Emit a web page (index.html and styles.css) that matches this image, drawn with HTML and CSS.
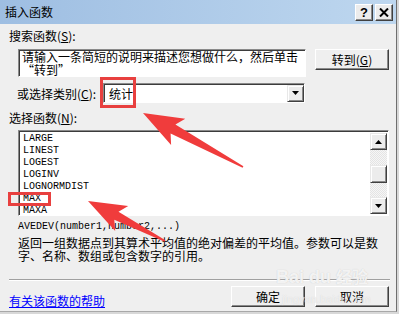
FILE: index.html
```html
<!DOCTYPE html>
<html>

<head>
  <meta charset="UTF-8">
  <title>插入函数</title>
  <link rel="stylesheet" href="styles.css">
</head>

<body>
  <div class="dialog">
    <div class="titlebar">
      <span class="title">插入函数</span>
      <div class="title-buttons">
        <span class="tbtn help">?</span>
        <span class="tbtn">
          <svg width="10" height="9" viewBox="0 0 10 9"><path d="M1 0.5 L9 8.5 M9 0.5 L1 8.5" stroke="#000" stroke-width="2"/></svg>
        </span>
      </div>
    </div>

    <div class="content">
      <div class="label">搜索函数(<u>S</u>):</div>
      <div class="search-row">
        <div class="textbox">请输入一条简短的说明来描述您想做什么，然后单击<br>“转到”</div>
        <div class="btn">转到(<u>G</u>)</div>
      </div>

      <div class="category-row">
        <div class="category-label">或选择类别(<u>C</u>):</div>
        <div class="select">
          <span class="select-value">统计</span>
          <span class="sbtn drop">
            <svg width="7" height="4" viewBox="0 0 7 4"><path d="M0 0 H7 L3.5 4 Z" fill="#000"/></svg>
          </span>
        </div>
      </div>

      <div class="label functions">选择函数(<u>N</u>):</div>
      <div class="listbox">
        <div class="list-items">
          <div>LARGE</div>
          <div>LINEST</div>
          <div>LOGEST</div>
          <div>LOGINV</div>
          <div>LOGNORMDIST</div>
          <div>MAX</div>
          <div>MAXA</div>
        </div>
        <div class="scrollbar">
          <span class="sbtn">
            <svg width="7" height="4" viewBox="0 0 7 4"><path d="M0 4 H7 L3.5 0 Z" fill="#000"/></svg>
          </span>
          <div class="track">
            <span class="sbtn thumb"></span>
          </div>
          <span class="sbtn">
            <svg width="7" height="4" viewBox="0 0 7 4"><path d="M0 0 H7 L3.5 4 Z" fill="#000"/></svg>
          </span>
        </div>
      </div>

      <div class="signature">AVEDEV(number1,number2,...)</div>
      <div class="description">
        <div>返回一组数据点到其算术平均值的绝对偏差的平均值。参数可以是数</div>
        <div>字、名称、数组或包含数字的引用。</div>
      </div>

      <div class="separator"></div>

      <div class="bottom-row">
        <a class="help-link" href="#">有关该函数的帮助</a>
        <div class="btn">确定</div>
        <div class="btn">取消</div>
      </div>
    </div>
  </div>

  <!-- annotations drawn on top of the screenshot -->
  <div class="watermark">Bai du <span class="wm-cn">经验</span></div>
  <div class="watermark-url">jingyan.baidu.com</div>
  <div class="mark mark-category"></div>
  <div class="mark mark-max"></div>
  <svg class="arrows" width="399" height="314" viewBox="0 0 399 314">
    <polygon fill="#f03c3c" points="143,113 185.3,118.7 175.4,124.6 243.4,166.3 242.6,167.7 170.6,133.4 171.1,145.1"/>
    <polygon fill="#f03c3c" points="88,201 128.2,206.1 118.5,211.8 165.4,240.3 164.6,241.7 114.3,219.8 115.2,230.9"/>
  </svg>
</body>

</html>
```

FILE: styles.css
```css
body {
  margin: 0;
  background: #d8d8d8;
  font-family: "Noto Sans CJK SC", "Liberation Sans", sans-serif;
  font-size: 12px;
  color: #000;
}

.dialog {
  position: relative;
  width: 396px;
  height: 311px;
  background: #efefef;
  border-right: 1px solid #6f6f6f;
  border-bottom: 1px solid #a8a8a8;
}

.titlebar {
  height: 24px;
  display: flex;
  align-items: center;
  justify-content: space-between;
  padding: 0 3px 0 5px;
  background: linear-gradient(to right, #9ebee2, #bed7ef);
}

.title {
  font-size: 12px;
  line-height: 14px;
}

.title-buttons {
  display: flex;
  gap: 2px;
}

.tbtn {
  width: 18px;
  height: 17px;
  box-sizing: border-box;
  display: flex;
  align-items: center;
  justify-content: center;
  background: #ececec;
  border: 1px solid;
  border-color: #fff #404040 #404040 #fff;
  box-shadow: inset -1px -1px #8a8a8a;
}

.help {
  font-family: "Liberation Sans", sans-serif;
  font-weight: bold;
  font-size: 13px;
  line-height: 13px;
}

.content {
  padding: 5px 0 0 9px;
}

.label {
  height: 14px;
  line-height: 14px;
}

.search-row {
  display: flex;
  align-items: flex-start;
  margin-top: 6px;
  padding-left: 9px;
}

.textbox {
  width: 288px;
  height: 28px;
  box-sizing: border-box;
  padding: 0 0 0 3px;
  background: #fff;
  border: 1px solid;
  border-color: #8a8a8a #fff #fff #8a8a8a;
  box-shadow: inset 1px 1px #3c3c3c;
  line-height: 13px;
  white-space: nowrap;
}

.btn {
  width: 74px;
  height: 21px;
  box-sizing: border-box;
  display: flex;
  align-items: center;
  justify-content: center;
  background: #efefef;
  border: 1px solid;
  border-color: #fff #404040 #404040 #fff;
  box-shadow: inset -1px -1px #8a8a8a;
}

.search-row .btn {
  margin-left: 9px;
}

.category-row {
  display: flex;
  align-items: center;
  margin-top: 6px;
  padding-left: 8px;
}

.category-label {
  width: 86px;
}

.select {
  width: 202px;
  height: 20px;
  box-sizing: border-box;
  display: flex;
  align-items: center;
  justify-content: space-between;
  background: #fff;
  border: 1px solid;
  border-color: #8a8a8a #fff #fff #8a8a8a;
  box-shadow: inset 1px 1px #3c3c3c;
  padding: 1px 0 0 5px;
}

.sbtn {
  width: 17px;
  height: 17px;
  box-sizing: border-box;
  display: flex;
  align-items: center;
  justify-content: center;
  background: #ececec;
  border: 1px solid;
  border-color: #e8e8e8 #404040 #404040 #e8e8e8;
  box-shadow: inset 1px 1px #fff, inset -1px -1px #8a8a8a;
  flex: none;
}

.drop {
  height: 17px;
  margin-top: -1px;
}

.functions {
  margin-top: 8px;
}

.listbox {
  display: flex;
  margin: 5px 0 0 9px;
  width: 371px;
  height: 86px;
  box-sizing: border-box;
  background: #fff;
  border: 1px solid;
  border-color: #8a8a8a #fff #fff #8a8a8a;
  box-shadow: inset 1px 1px #3c3c3c;
  padding: 2px 1px 1px 2px;
}

.list-items {
  flex: 1;
  padding-left: 2px;
  font-family: "Liberation Mono", monospace;
  font-size: 10px;
  line-height: 12px;
}

.scrollbar {
  display: flex;
  flex-direction: column;
  width: 17px;
}

.track {
  flex: 1;
  background: repeating-conic-gradient(#f6f6f6 0 25%, #e4e4e4 0 50%) 0 0 / 2px 2px;
}

.thumb {
  margin-top: 15px;
  height: 18px;
}

.signature {
  margin-top: 5px;
  padding-left: 9px;
  font-family: "Liberation Mono", monospace;
  font-size: 10px;
  line-height: 12px;
}

.description {
  margin-top: 3px;
  padding-left: 9px;
  line-height: 13px;
  white-space: nowrap;
}

.separator {
  margin-top: 17px;
  width: 381px;
  border-top: 1px solid #a0a0a0;
  border-bottom: 1px solid #fff;
}

.bottom-row {
  display: flex;
  align-items: center;
  gap: 10px;
  width: 380px;
  margin-top: 3px;
}

.help-link {
  flex: 1;
  color: #0000ff;
  margin-top: 8px;
}

.watermark {
  position: absolute;
  left: 276px;
  top: 266px;
  font-family: "Liberation Sans", sans-serif;
  font-weight: bold;
  font-size: 18px;
  line-height: 20px;
  color: rgba(255, 255, 255, 0.8);
  text-shadow: 0 0 1px #c4c4c4;
  white-space: nowrap;
}

.wm-cn {
  font-family: "Noto Sans CJK SC", sans-serif;
  font-size: 16px;
}

.watermark-url {
  position: absolute;
  left: 282px;
  top: 293px;
  font-family: "Liberation Sans", sans-serif;
  font-size: 11px;
  line-height: 12px;
  color: rgba(255, 255, 255, 0.6);
  text-shadow: 0 0 1px #d0d0d0;
}

.mark {
  position: absolute;
  border: 3px solid #e8403f;
  box-sizing: border-box;
}

.mark-category {
  left: 100px;
  top: 77px;
  width: 36px;
  height: 31px;
}

.mark-max {
  left: 8px;
  top: 192px;
  width: 43px;
  height: 14px;
}

.arrows {
  position: absolute;
  left: 0;
  top: 0;
}
```
